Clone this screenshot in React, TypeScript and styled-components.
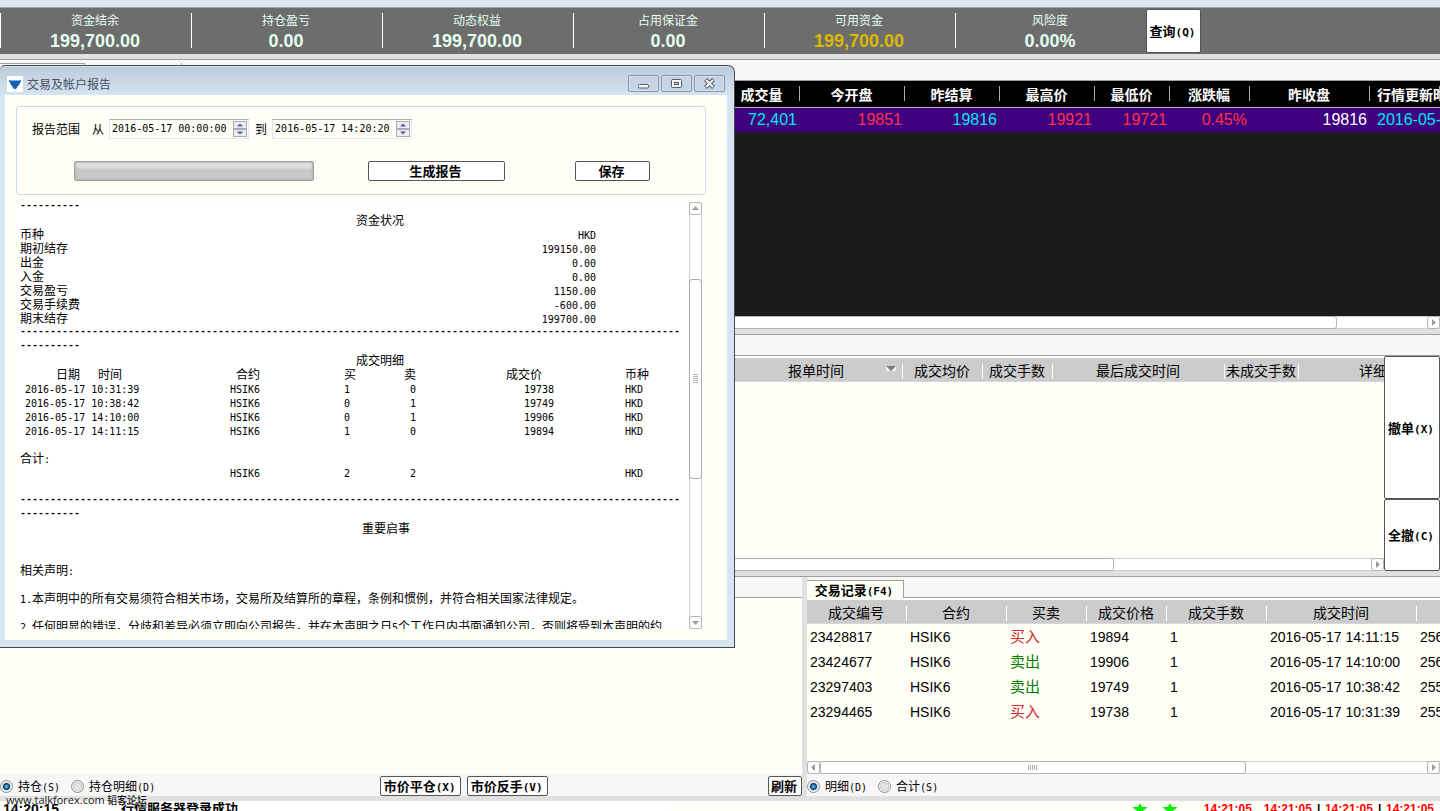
import React from "react";
import styled, { createGlobalStyle, css } from "styled-components";

const cjk = `"Noto Sans CJK SC", sans-serif`;
const sans = `"Liberation Sans", "Noto Sans CJK SC", sans-serif`;
const mono = `"DejaVu Sans Mono", "Noto Sans CJK SC", monospace`;

const c = {
  cream: "#fffff7",
  strip: "#f7f7f7",
  split: "#e0e0e0",
  line: "#9f9f9f",
  head: "#cccccc",
  edge: "#555555",
};

const Global = createGlobalStyle`
  *, *::before, *::after { box-sizing: border-box; }
  body { margin: 0; overflow: hidden; font-family: ${cjk}; font-size: 12px; color: #000; }
  button, input { font-family: inherit; color: inherit; }
`;

/* ---------- mixed Latin / Chinese text ---------- */

const Latin = styled.span<{ $bold?: boolean }>`
  font-family: ${mono};
  font-size: ${(p) => (p.$bold ? 11 : 10)}px;
  line-height: 0;
`;

function Mixed({ text, bold }: { text: string; bold?: boolean }) {
  return (
    <>
      {text.split(/([\x20-\x7e]+)/).map((part, i) =>
        i % 2 ? (
          <Latin key={i} $bold={bold}>
            {part}
          </Latin>
        ) : (
          part
        )
      )}
    </>
  );
}

/* ---------- shell ---------- */

const Shell = styled.div`
  position: relative;
  display: grid;
  grid-template-columns: minmax(0, 1fr);
  grid-template-rows:
    8px 46px 6px minmax(0, 269fr) 6px minmax(0, 236fr) 6px minmax(0, 219fr)
    5px 10px;
  height: 100vh;
  overflow: hidden;
  background: ${c.cream};
`;

const TopStrip = styled.div`
  background: #dde4f4;
  border-bottom: 1px solid #a3a8b8;
`;

const Splitter = styled.div`
  background: ${c.split};
  border-bottom: 1px solid ${c.line};
`;

const Gap = styled.div`
  background: ${c.split};
`;

/* ---------- account summary ---------- */

const Summary = styled.header`
  display: flex;
  align-items: flex-start;
  background: #6d6d6d;
`;

const Stat = styled.div`
  flex: 0 0 191px;
  height: 35px;
  margin-top: 5px;
  padding-right: 2px;
  border-left: 1px solid #fff;
  text-align: center;
  color: #e4fff0;
`;

const StatLabel = styled.div`
  font-size: 12px;
  line-height: 14px;
`;

const StatValue = styled.div<{ $gold?: boolean }>`
  margin-top: 4px;
  font: bold 18px/20px ${sans};
  color: ${(p) => (p.$gold ? "#dcb800" : "inherit")};
`;

const Button = styled.button<{ $w: number; $h?: number }>`
  flex: 0 0 auto;
  width: ${(p) => p.$w}px;
  height: ${(p) => p.$h ?? 20}px;
  padding: 0 2px 0 0;
  border: 1px solid ${c.edge};
  border-radius: 2px;
  background: #fff;
  font-size: 13px;
  font-weight: bold;
  line-height: 16px;
  white-space: nowrap;
`;

const QueryButton = styled(Button)`
  margin-top: 1px;
`;

/* ---------- shared panels ---------- */

const Panel = styled.section`
  display: flex;
  flex-direction: column;
  min-width: 0;
  min-height: 0;
`;

const TabStrip = styled.div`
  flex: 0 0 21px;
  display: flex;
  align-items: flex-end;
  background: ${c.strip};
  border-bottom: 1px solid ${c.line};
`;

const Tab = styled.button`
  width: 97px;
  height: 18px;
  margin-bottom: -1px;
  padding: 0 2px 0 0;
  border: solid ${c.line};
  border-width: 1px 1px 0 0;
  background: ${c.cream};
  font-size: 13px;
  font-weight: bold;
  line-height: 16px;
`;

const TabOutline = styled.div<{ $w: number }>`
  width: ${(p) => p.$w}px;
  height: 17px;
  border: solid ${c.line};
  border-width: 1px 1px 0 0;
  & + & {
    border-top: 0;
  }
`;

const Scroll = styled.div<{ $bg?: string; $top?: number }>`
  flex: 1 1 0;
  min-height: 0;
  overflow: hidden;
  padding-top: ${(p) => p.$top ?? 0}px;
  background: ${(p) => p.$bg ?? c.cream};
`;

const Table = styled.table`
  table-layout: fixed;
  width: 100%;
  border-collapse: collapse;
`;

const Col = styled.col<{ $w: number }>`
  width: ${(p) => p.$w}px;
`;

/* ---------- scroll bars ---------- */

const HTrack = styled.div`
  flex: 0 0 13px;
  display: flex;
  background: #fff;
  border: solid #d0d0d0;
  border-width: 1px 0;
`;

const Thumb = styled.div<{ $w: number }>`
  display: flex;
  align-items: center;
  justify-content: center;
  width: ${(p) => p.$w}px;
  height: 13px;
  margin: -1px auto -1px 0;
  border: 1px solid #b4b4b4;
  border-radius: 3px;
`;

const Arrow = styled.button`
  display: flex;
  align-items: center;
  justify-content: center;
  flex: 0 0 auto;
  width: 13px;
  height: 13px;
  margin: -1px 0;
  padding: 0;
  border: 1px solid #b4b4b4;
  border-radius: 3px;
  background: #fff;
`;

const VArrow = styled(Arrow)`
  margin: 0 -1px;
`;

const arrowPaths = {
  left: "M6 1v7L2 4.5z",
  right: "M3 1v7l4-3.5z",
  up: "M1 6h7L4.5 2z",
  down: "M1 3h7L4.5 7z",
};

function ArrowIcon({ dir }: { dir: keyof typeof arrowPaths }) {
  return (
    <svg width="9" height="9" viewBox="0 0 9 9" aria-hidden="true">
      <path d={arrowPaths[dir]} fill="#9c9c9c" />
    </svg>
  );
}

const Grip = styled.span<{ $vertical?: boolean }>`
  width: ${(p) => (p.$vertical ? 5 : 10)}px;
  height: ${(p) => (p.$vertical ? 10 : 5)}px;
  background: repeating-linear-gradient(
    ${(p) => (p.$vertical ? "180deg" : "90deg")},
    #b0b0b0 0 1px,
    #fff 1px 2px
  );
`;

/* ---------- quotes ---------- */

const quoteTone = {
  cyan: "#00e8f0",
  red: "#ff3048",
  white: "#ffffff",
};

const QuoteTable = styled(Table)`
  th {
    height: 26px;
    padding: 0 2px 0 0;
    border-bottom: 1px solid #b8b8b8;
    background: linear-gradient(#a8a8a8, #a8a8a8) right 0 center / 1px 15px
        no-repeat,
      #000;
    color: #fff;
    font: bold 14px/20px ${cjk};
    white-space: nowrap;
  }
  th:first-child {
    background: #000;
  }
  td {
    height: 25px;
    padding: 0 3px;
    background: #3f007f;
    font: 16px/20px ${sans};
    text-align: right;
    white-space: nowrap;
  }
  th:last-child,
  td:last-child {
    padding: 0 0 0 7px;
    text-align: left;
  }
`;

const QuoteCell = styled.td<{ $tone: keyof typeof quoteTone }>`
  color: ${(p) => quoteTone[p.$tone]};
`;

const quotes: [string, number, string, keyof typeof quoteTone][] = [
  ["成交量", 75, "72,401", "cyan"],
  ["今开盘", 105, "19851", "red"],
  ["昨结算", 95, "19816", "cyan"],
  ["最高价", 95, "19921", "red"],
  ["最低价", 75, "19721", "red"],
  ["涨跌幅", 80, "0.45%", "red"],
  ["昨收盘", 120, "19816", "white"],
];

function Quotes() {
  return (
    <Panel>
      <TabStrip>
        <TabOutline $w={85} />
        <TabOutline $w={97} />
      </TabStrip>
      <Scroll $bg="#1b1b1b">
        <QuoteTable>
          <colgroup>
            <Col $w={725} />
            {quotes.map(([h, w]) => (
              <Col key={h} $w={w} />
            ))}
            <col />
          </colgroup>
          <thead>
            <tr>
              <th />
              {quotes.map(([h]) => (
                <th key={h}>{h}</th>
              ))}
              <th>行情更新时间</th>
            </tr>
          </thead>
          <tbody>
            <tr>
              <td />
              {quotes.map(([h, , v, tone]) => (
                <QuoteCell key={h} $tone={tone}>
                  {v}
                </QuoteCell>
              ))}
              <QuoteCell $tone="cyan">2016-05-17</QuoteCell>
            </tr>
          </tbody>
        </QuoteTable>
      </Scroll>
      <HTrack>
        <Thumb $w={1337} />
        <Arrow aria-label="向右滚动">
          <ArrowIcon dir="right" />
        </Arrow>
      </HTrack>
    </Panel>
  );
}

/* ---------- orders ---------- */

const headCell = css`
  th {
    height: 23px;
    padding: 1px 2px 0 0;
    border-bottom: 1px solid #d6d6dc;
    background: linear-gradient(#fff, #fff) right 0 top 6px / 1px 15px no-repeat,
      ${c.head};
    font: 14px/18px ${cjk};
    white-space: nowrap;
  }
  th:last-child {
    background: ${c.head};
  }
`;

const OrderTable = styled(Table)`
  ${headCell}
  th:first-child {
    background: ${c.head};
  }
  th:last-child {
    padding-left: 60px;
    text-align: left;
  }
`;

const OrderRow = styled.div`
  display: flex;
  flex: 1 1 0;
  min-height: 0;
`;

const OrderMain = styled(Panel)`
  flex: 1 1 0;
`;

const OrderActions = styled.div`
  flex: 0 0 56px;
  display: grid;
  grid-template-rows: 2fr 1fr;
`;

const ActionButton = styled(Button)`
  height: 100%;
`;

const SortLabel = styled.span`
  display: flex;
  justify-content: flex-end;
  gap: 42px;
  padding-right: 5px;
`;

function Orders() {
  return (
    <Panel>
      <TabStrip />
      <OrderRow>
        <OrderMain>
          <Scroll $top={2}>
            <OrderTable>
              <colgroup>
                <Col $w={730} />
                <Col $w={173} />
                <Col $w={80} />
                <Col $w={70} />
                <Col $w={172} />
                <Col $w={74} />
                <col />
              </colgroup>
              <thead>
                <tr>
                  <th />
                  <th aria-sort="descending">
                    <SortLabel>
                      报单时间
                      <svg width="10" height="16" viewBox="0 0 10 16" aria-hidden="true">
                        <path d="M0 5h10v5H0z" fill="#f2f2ec" />
                        <path d="M0 5h10L5 10z" fill="#7c7c7c" />
                      </svg>
                    </SortLabel>
                  </th>
                  <th>成交均价</th>
                  <th>成交手数</th>
                  <th>最后成交时间</th>
                  <th>未成交手数</th>
                  <th>详细</th>
                </tr>
              </thead>
            </OrderTable>
          </Scroll>
          <HTrack>
            <Thumb $w={1114} />
            <Arrow aria-label="向右滚动">
              <ArrowIcon dir="right" />
            </Arrow>
          </HTrack>
        </OrderMain>
        <OrderActions>
          <ActionButton $w={56}>
            <Mixed text="撤单(X)" bold />
          </ActionButton>
          <ActionButton $w={56}>
            <Mixed text="全撤(C)" bold />
          </ActionButton>
        </OrderActions>
      </OrderRow>
    </Panel>
  );
}

/* ---------- positions and trades ---------- */

const Bottom = styled.div`
  display: grid;
  grid-template-columns: minmax(0, 802fr) 5px minmax(0, 633fr);
  min-height: 0;
`;

const Footer = styled.div`
  flex: 0 0 22px;
  display: flex;
  align-items: center;
  gap: 6px;
  padding-top: 2px;
  background: ${c.strip};
`;

const RadioLabel = styled.label`
  display: flex;
  align-items: center;
  gap: 5px;
  margin-right: 5px;
  line-height: 16px;
  white-space: nowrap;
`;

const Radio = styled.input`
  appearance: none;
  width: 13px;
  height: 13px;
  margin: 0;
  border: 1px solid #8e8f8f;
  border-radius: 50%;
  background: radial-gradient(circle, #e4e4e6 0 3px, #c8cacd 4px, #f4f4f4 5px);
  &:checked {
    background: radial-gradient(
      circle at 50% 50%,
      #6fd0f5 0,
      #1b6fa8 2px,
      #0d3b63 3px,
      #cfdce6 4px,
      #f4f4f4 5px
    );
  }
`;

const ButtonGroup = styled.div`
  display: flex;
  flex: 1;
  gap: 6px;
  padding-left: 214px;
  & > :last-child {
    margin-left: auto;
  }
`;

function RadioOption(p: { name: string; text: string; checked?: boolean }) {
  return (
    <RadioLabel>
      <Radio type="radio" name={p.name} defaultChecked={p.checked} />
      <span>
        <Mixed text={p.text} />
      </span>
    </RadioLabel>
  );
}

const TradeTable = styled(Table)`
  ${headCell}
  td {
    height: 25px;
    padding: 2px 0 0 3px;
    font: 14px/18px ${sans};
    white-space: nowrap;
  }
`;

const Side = styled.td<{ $buy: boolean }>`
  &&& {
    font-size: 15px;
  }
  color: ${(p) => (p.$buy ? "#d02c2c" : "#008000")};
`;

const trades = [
  ["23428817", "买入", "19894", "2016-05-17 14:11:15", "256"],
  ["23424677", "卖出", "19906", "2016-05-17 14:10:00", "256"],
  ["23297403", "卖出", "19749", "2016-05-17 10:38:42", "255"],
  ["23294465", "买入", "19738", "2016-05-17 10:31:39", "255"],
];

function Trades() {
  return (
    <Panel>
      <TabStrip>
        <Tab>
          <Mixed text="交易记录(F4)" bold />
        </Tab>
      </TabStrip>
      <Scroll $top={2}>
        <TradeTable>
          <colgroup>
            {[100, 100, 80, 80, 100, 150].map((w, i) => (
              <Col key={i} $w={w} />
            ))}
            <col />
          </colgroup>
          <thead>
            <tr>
              {["成交编号", "合约", "买卖", "成交价格", "成交手数", "成交时间", ""].map((h) => (
                <th key={h}>{h}</th>
              ))}
            </tr>
          </thead>
          <tbody>
            {trades.map(([id, side, price, time, ref]) => (
              <tr key={id}>
                <td>{id}</td>
                <td>HSIK6</td>
                <Side $buy={side === "买入"}>{side}</Side>
                <td>{price}</td>
                <td>1</td>
                <td>{time}</td>
                <td>{ref}</td>
              </tr>
            ))}
          </tbody>
        </TradeTable>
      </Scroll>
      <HTrack>
        <Arrow aria-label="向左滚动">
          <ArrowIcon dir="left" />
        </Arrow>
        <Thumb $w={426}>
          <Grip />
        </Thumb>
        <Arrow aria-label="向右滚动">
          <ArrowIcon dir="right" />
        </Arrow>
      </HTrack>
      <Footer>
        <RadioOption name="trades" text="明细(D)" checked />
        <RadioOption name="trades" text="合计(S)" />
      </Footer>
    </Panel>
  );
}

/* ---------- status bar ---------- */

const Status = styled.footer`
  display: flex;
  overflow: hidden;
  background: ${c.cream};
  font: bold 12px/14px ${sans};
  white-space: nowrap;
`;

const StatusLog = styled.div`
  flex: 0 0 670px;
  display: flex;
  padding-top: 1px;
  background: #fff;
  font-size: 13px;
`;

const LogTime = styled.span`
  width: 121px;
  padding-left: 3px;
  font-size: 14px;
`;

const StatusRight = styled.div`
  display: flex;
  gap: 5px;
  margin-left: auto;
  padding: 1px 6px 0 0;
  color: #f00;
`;

const Stars = styled.span`
  display: flex;
  gap: 14px;
  margin-right: 21px;
`;

const Bar = styled.span`
  width: 3px;
  color: #000;
`;

const FirstTime = styled.span`
  margin-right: 7px;
`;

const Star = () => (
  <svg width="16" height="16" viewBox="0 0 16 16" aria-hidden="true">
    <path d="M8 1l2 4h5.500l-4.500 4 1.500 6L8 11.500 3.500 15 5 9 .5 5H6z" fill="#00f000" />
  </svg>
);

const Watermark = styled.div`
  position: absolute;
  left: 6px;
  bottom: 4px;
  font: 500 10px/14px ${cjk};
  color: #111;
  text-shadow: 0 0 1px #fff, 0 0 2px #fff;
`;

const Site = styled.span`
  font-family: "Open Sans", sans-serif;
  font-size: 11px;
`;

/* ---------- report window ---------- */

const Window = styled.section`
  position: absolute;
  left: 0;
  top: 65px;
  width: 735px;
  height: 583px;
  display: flex;
  flex-direction: column;
  border: solid #454a50;
  border-width: 1px 1px 1px 0;
  border-radius: 5px 7px 0 0;
  padding: 0 7px 7px 5px;
  background: linear-gradient(#bdccda, #d7e4f2 30px);
  box-shadow: inset 0 1px #d7e2ec;
`;

const TitleBar = styled.div`
  flex: 0 0 29px;
  display: flex;
  align-items: center;
  padding: 6px 2px 0;
`;

const Title = styled.h1`
  flex: 1;
  margin: 0 0 0 4px;
  font-size: 12px;
  font-weight: normal;
  line-height: 16px;
  color: #46525f;
`;

const CaptionButtons = styled.div`
  display: flex;
  gap: 2px;
`;

const CaptionButton = styled.button`
  display: flex;
  align-items: center;
  justify-content: center;
  width: 31px;
  height: 17px;
  padding: 0;
  border: 1px solid #8697ab;
  border-radius: 2px;
  background: #c6d5e5;
  box-shadow: inset 0 0 0 1px #d5e0ec;
`;

const WindowBody = styled.div`
  flex: 1;
  min-height: 0;
  display: flex;
  flex-direction: column;
  padding: 11px 21px 11px 11px;
  background: ${c.cream};
`;

const Range = styled.form`
  flex: 0 0 89px;
  padding: 12px 15px 0;
  border: 1px solid #cddbe8;
  border-radius: 3px;
`;

const DateRow = styled.div`
  display: flex;
  align-items: center;
  height: 20px;
`;

const FieldLabel = styled.label`
  margin-right: 5px;
  line-height: 20px;
  white-space: pre;
`;

const DateBox = styled.div`
  display: flex;
  align-items: center;
  width: 140px;
  height: 20px;
  margin-right: 6px;
  padding-right: 1px;
  border: 1px solid #e0e6f0;
  border-top-color: #abadb3;
`;

const DateInput = styled.input`
  flex: 1;
  min-width: 0;
  padding: 0 2px;
  border: 0;
  outline: 0;
  background: transparent;
  &&& {
    font: 10px/16px ${mono};
  }
`;

const Spinner = styled.div`
  display: grid;
  grid-template-rows: 8px 8px;
  width: 14px;
`;

const SpinButton = styled.button`
  display: flex;
  align-items: center;
  justify-content: center;
  padding: 0;
  border: 1px solid #a9acb5;
  background: #eeeef2;
`;

const ActionRow = styled.div`
  display: flex;
  align-items: center;
  margin-top: 22px;
  padding-left: 42px;
`;

const Progress = styled.div`
  width: 240px;
  height: 20px;
  margin-right: 54px;
  border: 1px solid #a0a0a0;
  border-radius: 2px;
  background: linear-gradient(#eeeeee, #d6d6d6 6px, #c8c8c8 8px, #cacaca);
  box-shadow: inset 0 0 2px 1px #b4b4b4;
`;

const SaveButton = styled(Button)`
  margin-left: 70px;
`;

const ReportFrame = styled.div`
  flex: 1;
  min-height: 0;
  display: flex;
  margin: 7px -7px 0 0;
  padding-right: 11px;
`;

const Report = styled.div`
  flex: 1;
  min-width: 0;
  overflow: hidden;
  padding-left: 4px;
  background: #fff;
  line-height: 14px;
`;

const ReportPage = styled.div`
  margin-top: -3px;
`;

const Rule = styled.div`
  width: 664px;
  word-break: break-all;
  font: bold 10px/14px "Liberation Mono", monospace;
`;

const Heading = styled.h2<{ $indent?: boolean }>`
  margin: 0;
  padding-left: ${(p) => (p.$indent ? 342 : 336)}px;
  font-size: 12px;
  font-weight: normal;
  line-height: 14px;
`;

const Para = styled.p`
  margin: 0 0 14px;
  height: 14px;
  white-space: nowrap;
`;

const Blank = styled.div<{ $lines: number }>`
  height: ${(p) => p.$lines * 14}px;
`;

const ReportTable = styled.table`
  table-layout: fixed;
  border-collapse: collapse;
  th,
  td {
    height: 14px;
    padding: 0;
    font-size: 12px;
    font-weight: normal;
    line-height: 14px;
    text-align: left;
    white-space: pre;
  }
`;

const FundTable = styled(ReportTable)`
  width: 576px;
  td {
    text-align: right;
  }
`;

const DealTable = styled(ReportTable)`
  width: 664px;
  td:nth-child(1) {
    padding-left: 5px;
  }
  th:nth-child(1) {
    padding-left: 36px;
  }
  && :nth-child(2),
  && :nth-child(4),
  && :nth-child(5) {
    text-align: right;
  }
  && :nth-child(3) {
    padding-left: 84px;
  }
  th:nth-child(5) {
    padding-right: 12px;
  }
  && :nth-child(6) {
    padding-left: 71px;
  }
  && td[colspan] {
    padding-left: 0;
  }
`;

const VTrack = styled.div`
  display: flex;
  flex-direction: column;
  flex: 0 0 13px;
  border: solid #d0d0d0;
  border-width: 0 1px;
  background: #fff;
`;

const VThumb = styled.div`
  display: flex;
  align-items: center;
  justify-content: center;
  height: 200px;
  margin: 64px -1px auto;
  border: 1px solid #a8a8a8;
  border-radius: 3px;
`;

const funds = [
  ["币种", "HKD"],
  ["期初结存", "199150.00"],
  ["出金", "0.00"],
  ["入金", "0.00"],
  ["交易盈亏", "1150.00"],
  ["交易手续费", "-600.00"],
  ["期末结存", "199700.00"],
];

const deals = [
  ["2016-05-17 10:31:39", "HSIK6", "1", "0", "19738", "HKD"],
  ["2016-05-17 10:38:42", "HSIK6", "0", "1", "19749", "HKD"],
  ["2016-05-17 14:10:00", "HSIK6", "0", "1", "19906", "HKD"],
  ["2016-05-17 14:11:15", "HSIK6", "1", "0", "19894", "HKD"],
];

function DealRow({ cells }: { cells: string[] }) {
  return (
    <tr>
      {cells.map((t, i) => (
        <td key={i}>
          <Mixed text={t} />
        </td>
      ))}
    </tr>
  );
}

function DateField({ id, value }: { id: string; value: string }) {
  return (
    <DateBox>
      <DateInput id={id} defaultValue={value} />
      <Spinner>
        <SpinButton type="button" aria-label="增加">
          <svg width="6" height="4" viewBox="0 0 6 4" aria-hidden="true">
            <path d="M0 3.500h6L3 .5z" fill="#4a5fb0" />
          </svg>
        </SpinButton>
        <SpinButton type="button" aria-label="减少">
          <svg width="6" height="4" viewBox="0 0 6 4" aria-hidden="true">
            <path d="M0 .5h6L3 3.500z" fill="#4a5fb0" />
          </svg>
        </SpinButton>
      </Spinner>
    </DateBox>
  );
}

function ReportWindow() {
  return (
    <Window>
      <TitleBar>
        <svg width="16" height="16" viewBox="0 0 16 16" aria-hidden="true">
          <path d="M0 0h16v16H0z" fill="#fff" />
          <path
            d="M2.500 3c-.2 1 .2 1.500 1.500 1.500h8c1.300 0 1.700-.5 1.500-1.500 1 1.500.5 3.200-.7 3.800L12.500 8.500 10.500 10.500 9.500 12.500 8 13.300 6.500 12.500 5.500 10.500 3.500 8.500 3.200 6.800C2 6.200 1.500 4.500 2.500 3z"
            fill="#0f62b8"
          />
        </svg>
        <Title>交易及帐户报告</Title>
        <CaptionButtons>
          <CaptionButton aria-label="最小化">
            <svg width="13" height="11" viewBox="0 0 13 11" aria-hidden="true">
              <rect x="1.500" y="6.500" width="10" height="3.500" rx="1" fill="#f4f6f8" stroke="#555d68" />
            </svg>
          </CaptionButton>
          <CaptionButton aria-label="最大化">
            <svg width="13" height="11" viewBox="0 0 13 11" aria-hidden="true">
              <rect x="1.500" y="1.500" width="10" height="8" rx="1" fill="#f4f6f8" stroke="#555d68" />
              <rect x="4.500" y="4.500" width="4" height="2" fill="#c6d5e5" stroke="#555d68" />
            </svg>
          </CaptionButton>
          <CaptionButton aria-label="关闭">
            <svg width="13" height="11" viewBox="0 0 13 11" aria-hidden="true">
              <path d="M2.500 1.500l8 8M10.500 1.500l-8 8" stroke="#555d68" strokeWidth="4" />
              <path d="M3 2l7 7M10 2L3 9" stroke="#f4f6f8" strokeWidth="2" />
            </svg>
          </CaptionButton>
        </CaptionButtons>
      </TitleBar>
      <WindowBody>
        <Range onSubmit={(e) => e.preventDefault()}>
          <DateRow>
            <FieldLabel htmlFor="from">
              报告范围
              <Latin>{"  "}</Latin>从
            </FieldLabel>
            <DateField id="from" value="2016-05-17 00:00:00" />
            <FieldLabel htmlFor="to">到</FieldLabel>
            <DateField id="to" value="2016-05-17 14:20:20" />
          </DateRow>
          <ActionRow>
            <Progress role="progressbar" aria-label="报告进度" />
            <Button $w={137}>生成报告</Button>
            <SaveButton $w={75}>保存</SaveButton>
          </ActionRow>
        </Range>
        <ReportFrame>
          <Report>
            <ReportPage>
              <Rule>{"-".repeat(10)}</Rule>
              <Heading>资金状况</Heading>
              <FundTable>
                <tbody>
                  {funds.map(([k, v]) => (
                    <tr key={k}>
                      <th scope="row">{k}</th>
                      <td>
                        <Mixed text={v} />
                      </td>
                    </tr>
                  ))}
                </tbody>
              </FundTable>
              <Rule>{"-".repeat(120)}</Rule>
              <Heading>成交明细</Heading>
              <DealTable>
                <colgroup>
                  <Col $w={140} />
                  <Col $w={100} />
                  <Col $w={105} />
                  <Col $w={51} />
                  <Col $w={138} />
                  <col />
                </colgroup>
                <thead>
                  <tr>
                    <th>
                      日期<Latin>{"   "}</Latin>时间
                    </th>
                    <th>合约</th>
                    <th>买</th>
                    <th>卖</th>
                    <th>成交价</th>
                    <th>币种</th>
                  </tr>
                </thead>
                <tbody>
                  {deals.map((d) => (
                    <DealRow key={d[0]} cells={d} />
                  ))}
                  <tr>
                    <td colSpan={6} />
                  </tr>
                  <tr>
                    <td colSpan={6}>
                      <Mixed text="合计:" />
                    </td>
                  </tr>
                  <DealRow cells={["", "HSIK6", "2", "2", "", "HKD"]} />
                </tbody>
              </DealTable>
              <Blank $lines={1} />
              <Rule>{"-".repeat(120)}</Rule>
              <Heading $indent>重要启事</Heading>
              <Blank $lines={2} />
              <Para>
                <Mixed text="相关声明:" />
              </Para>
              <Para>
                <Mixed text="1.本声明中的所有交易须符合相关市场，交易所及结算所的章程，条例和惯例，并符合相关国家法律规定。" />
              </Para>
              <Para>
                <Mixed text="2.任何明显的错误，分歧和差异必须立即向公司报告，并在本声明之日5个工作日内书面通知公司，否则将受到本声明的约" />
              </Para>
            </ReportPage>
          </Report>
          <VTrack>
            <VArrow aria-label="向上滚动">
              <ArrowIcon dir="up" />
            </VArrow>
            <VThumb>
              <Grip $vertical />
            </VThumb>
            <VArrow aria-label="向下滚动">
              <ArrowIcon dir="down" />
            </VArrow>
          </VTrack>
        </ReportFrame>
      </WindowBody>
    </Window>
  );
}

/* ---------- page ---------- */

const stats: [string, string][] = [
  ["资金结余", "199,700.00"],
  ["持仓盈亏", "0.00"],
  ["动态权益", "199,700.00"],
  ["占用保证金", "0.00"],
  ["可用资金", "199,700.00"],
  ["风险度", "0.00%"],
];

export default function App() {
  return (
    <>
      <Global />
      <Shell>
        <TopStrip />
        <Summary>
          {stats.map(([label, value]) => (
            <Stat key={label}>
              <StatLabel>{label}</StatLabel>
              <StatValue $gold={label === "可用资金"}>{value}</StatValue>
            </Stat>
          ))}
          <QueryButton $w={55} $h={44}>
            <Mixed text="查询(Q)" bold />
          </QueryButton>
        </Summary>
        <Splitter />
        <Quotes />
        <Splitter />
        <Orders />
        <Splitter />
        <Bottom>
          <Panel>
            <TabStrip />
            <Scroll />
            <Footer>
              <RadioOption name="positions" text="持仓(S)" checked />
              <RadioOption name="positions" text="持仓明细(D)" />
              <ButtonGroup>
                <Button $w={81}>
                  <Mixed text="市价平仓(X)" bold />
                </Button>
                <Button $w={81}>
                  <Mixed text="市价反手(V)" bold />
                </Button>
                <Button $w={34}>刷新</Button>
              </ButtonGroup>
            </Footer>
          </Panel>
          <Gap />
          <Trades />
        </Bottom>
        <Gap />
        <Status>
          <StatusLog>
            <LogTime>14:20:15</LogTime>
            <span>行情服务器登录成功</span>
          </StatusLog>
          <StatusRight>
            <Stars>
              <Star />
              <Star />
            </Stars>
            <FirstTime>14:21:05</FirstTime>
            <span>14:21:05</span>
            <Bar>|</Bar>
            <span>14:21:05</span>
            <Bar>|</Bar>
            <span>14:21:05</span>
          </StatusRight>
        </Status>
        <Watermark>
          <Site>www.talkforex.com</Site> 韬客论坛
        </Watermark>
        <ReportWindow />
      </Shell>
    </>
  );
}
